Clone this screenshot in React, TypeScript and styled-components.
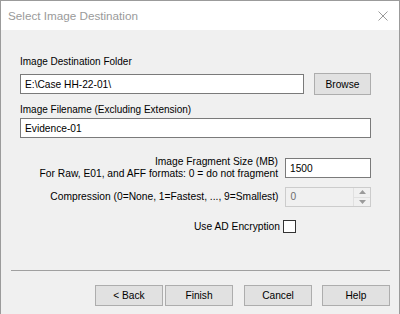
import React from 'react';
import styled, { createGlobalStyle } from 'styled-components';

const GlobalStyle = createGlobalStyle`
  html, body {
    margin: 0;
    padding: 0;
    background: #ffffff;
  }
  body {
    font-family: "Liberation Sans", Arial, sans-serif;
    font-size: 10px;
    color: #000000;
  }
`;

const Window = styled.div`
  width: 400px;
  height: 314px;
  box-sizing: border-box;
  border: 1px solid #9b9b9b;
  border-bottom: none;
  display: flex;
  flex-direction: column;
  background: #f0f0f0;
  overflow: hidden;
`;

const TitleBar = styled.div`
  height: 29px;
  flex: none;
  background: #ffffff;
  display: flex;
  align-items: center;
  justify-content: space-between;
  padding: 0 11px 0 7px;
`;

const Title = styled.span`
  font-size: 11.7px;
  color: #9a9a9a;
`;

const CloseIcon = styled.svg`
  width: 10px;
  height: 10px;
  display: block;
`;

const Content = styled.div`
  display: flex;
  flex-direction: column;
  padding: 24px 28px 0 19px;
`;

const FieldLabel = styled.label<{ $gap?: number }>`
  display: block;
  line-height: 15px;
  height: 15px;
  margin-bottom: ${(p) => p.$gap ?? 4}px;
`;

const InputRow = styled.div`
  display: flex;
  align-items: center;
  margin-bottom: 7px;
`;

const TextBox = styled.input<{ $w: number }>`
  width: ${(p) => p.$w}px;
  height: 20px;
  box-sizing: border-box;
  border: 1px solid #7a7a7a;
  background: #ffffff;
  padding: 0 4px;
  font: inherit;
  font-size: 10.2px;
  color: #000000;
  outline: none;
`;

const PushButton = styled.button<{ $w?: number }>`
  width: ${(p) => p.$w ?? 68}px;
  height: 21px;
  box-sizing: border-box;
  border: 1px solid #adadad;
  background: #e1e1e1;
  font: inherit;
  font-size: 10.2px;
  color: #000000;
  padding: 0;
  line-height: 19px;
`;

const BrowseButton = styled(PushButton)`
  height: 22px;
  margin-left: 10px;
`;

const OptionRow = styled.div<{ $top: number }>`
  display: flex;
  align-items: center;
  margin-top: ${(p) => p.$top}px;
`;

const OptionLabel = styled.div<{ $gap?: number }>`
  width: 260px;
  text-align: right;
  font-size: 10.25px;
  line-height: 12px;
  margin-right: ${(p) => p.$gap ?? 7}px;
`;

const SpinBox = styled.div`
  width: 86px;
  height: 20px;
  box-sizing: border-box;
  border: 1px solid #cccccc;
  background: #f0f0f0;
  display: flex;
`;

const SpinValue = styled.span`
  flex: 1;
  padding-left: 4px;
  line-height: 18px;
  font-size: 10.2px;
  color: #6d6d6d;
`;

const SpinArrows = styled.div`
  width: 16px;
  display: flex;
  flex-direction: column;
  border-left: 1px solid #e0e0e0;
`;

const SpinArrow = styled.div`
  flex: 1;
  display: flex;
  align-items: center;
  justify-content: center;
  border-bottom: 1px solid #e0e0e0;
  &:last-child {
    border-bottom: none;
  }
`;

const CheckBox = styled.div`
  width: 13px;
  height: 13px;
  box-sizing: border-box;
  border: 1px solid #333333;
  background: #ffffff;
`;

const Footer = styled.div`
  margin-top: auto;
  padding: 0 9px 8px 10px;
`;

const Separator = styled.div`
  height: 1px;
  background: #a0a0a0;
`;

const ButtonRow = styled.div`
  display: flex;
  justify-content: flex-end;
  margin-top: 14px;
  gap: 10px;
`;

const ButtonPair = styled.div`
  display: flex;
  gap: 2px;
  margin-right: 1px;
`;

const Arrow = ({ up }: { up?: boolean }) => (
  <svg width="7" height="4" viewBox="0 0 7 4">
    <path d={up ? 'M0 4 L3.5 0 L7 4 Z' : 'M0 0 L3.5 4 L7 0 Z'} fill="#9a9a9a" />
  </svg>
);

export default function App() {
  return (
    <>
      <GlobalStyle />
      <Window>
        <TitleBar>
          <Title>Select Image Destination</Title>
          <CloseIcon viewBox="0 0 10 10">
            <path d="M0.5 0.5 L9.5 9.5 M9.5 0.5 L0.5 9.5" stroke="#9a9a9a" strokeWidth="1" />
          </CloseIcon>
        </TitleBar>
        <Content>
          <FieldLabel>Image Destination Folder</FieldLabel>
          <InputRow>
            <TextBox $w={284} defaultValue="E:\Case HH-22-01\" />
            <BrowseButton $w={57}>Browse</BrowseButton>
          </InputRow>
          <FieldLabel $gap={1}>Image Filename (Excluding Extension)</FieldLabel>
          <TextBox $w={351} defaultValue="Evidence-01" />
          <OptionRow $top={18}>
            <OptionLabel>
              Image Fragment Size (MB)
              <br />
              For Raw, E01, and AFF formats: 0 = do not fragment
            </OptionLabel>
            <TextBox $w={86} defaultValue="1500" />
          </OptionRow>
          <OptionRow $top={7}>
            <OptionLabel>Compression (0=None, 1=Fastest, ..., 9=Smallest)</OptionLabel>
            <SpinBox>
              <SpinValue>0</SpinValue>
              <SpinArrows>
                <SpinArrow>
                  <Arrow up />
                </SpinArrow>
                <SpinArrow>
                  <Arrow />
                </SpinArrow>
              </SpinArrows>
            </SpinBox>
          </OptionRow>
          <OptionRow $top={13}>
            <OptionLabel $gap={3}>Use AD Encryption</OptionLabel>
            <CheckBox />
          </OptionRow>
        </Content>
        <Footer>
          <Separator />
          <ButtonRow>
            <ButtonPair>
              <PushButton>&lt; Back</PushButton>
              <PushButton>Finish</PushButton>
            </ButtonPair>
            <PushButton>Cancel</PushButton>
            <PushButton>Help</PushButton>
          </ButtonRow>
        </Footer>
      </Window>
    </>
  );
}
